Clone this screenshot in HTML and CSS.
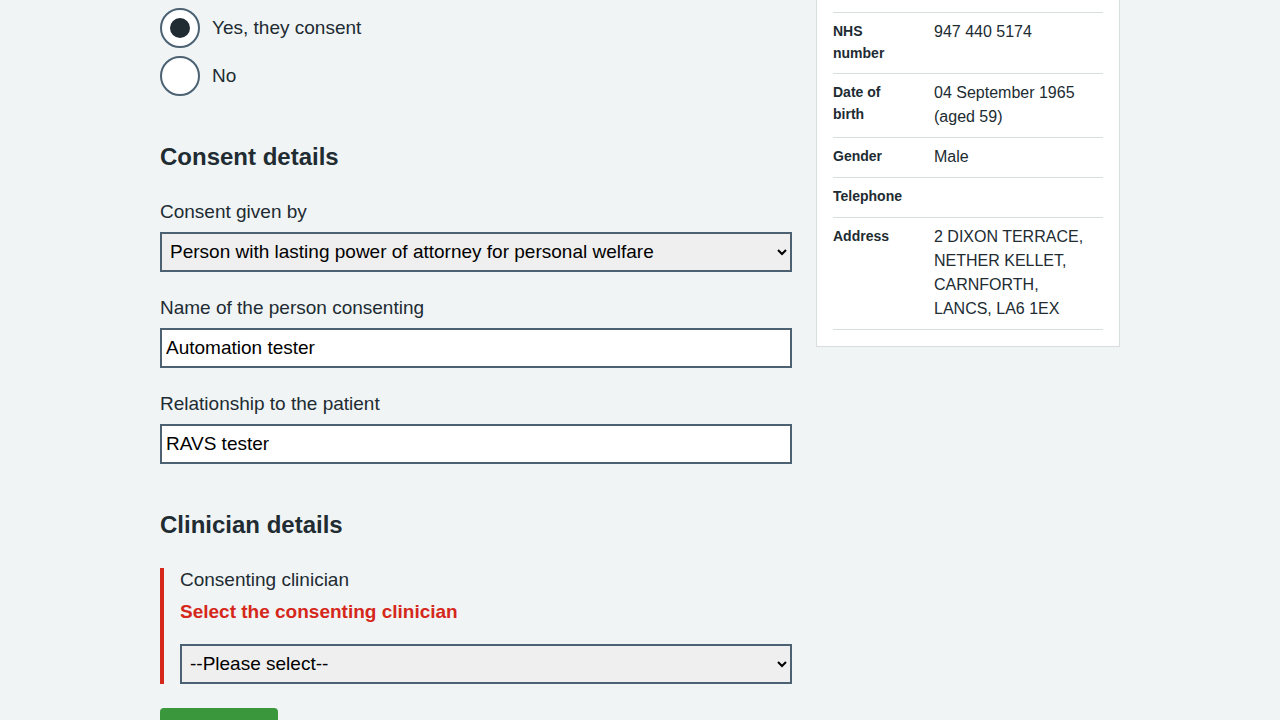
FILE: index.html
```html
<!DOCTYPE html>
<html lang="en">
<head>
<meta charset="utf-8">
<title>Consent</title>
<link rel="stylesheet" href="styles.css">
</head>
<body>
<div class="page">
  <main class="main">
    <div class="radios">
      <label class="radio"><input type="radio" name="consent" checked><span>Yes, they consent</span></label>
      <label class="radio"><input type="radio" name="consent"><span>No</span></label>
    </div>

    <h2 class="heading">Consent details</h2>
    <div class="group">
      <label class="label" for="given">Consent given by</label>
      <select id="given" class="select">
        <option>Person with lasting power of attorney for personal welfare</option>
      </select>
    </div>
    <div class="group">
      <label class="label" for="name">Name of the person consenting</label>
      <input id="name" class="input" type="text" value="Automation tester">
    </div>
    <div class="group">
      <label class="label" for="rel">Relationship to the patient</label>
      <input id="rel" class="input" type="text" value="RAVS tester">
    </div>

    <h2 class="heading">Clinician details</h2>
    <div class="group group-error">
      <label class="label" for="clin">Consenting clinician</label>
      <p class="error-msg">Select the consenting clinician</p>
      <select id="clin" class="select">
        <option>--Please select--</option>
      </select>
    </div>
    <button class="button" type="button">Continue</button>
  </main>

  <aside class="side">
    <div class="card">
      <dl class="summary">
        <div class="row"><dt>NHS number</dt><dd>947 440 5174</dd></div>
        <div class="row"><dt>Date of birth</dt><dd>04 September 1965 (aged 59)</dd></div>
        <div class="row"><dt>Gender</dt><dd>Male</dd></div>
        <div class="row"><dt>Telephone</dt><dd></dd></div>
        <div class="row"><dt>Address</dt><dd>2 DIXON TERRACE,<br>NETHER KELLET,<br>CARNFORTH,<br>LANCS, LA6 1EX</dd></div>
      </dl>
    </div>
  </aside>
</div>
</body>
</html>
```

FILE: styles.css
```css
* { box-sizing: border-box; }
html, body { margin: 0; padding: 0; }
body {
  background: #f0f4f5;
  color: #212b32;
  font-family: "Liberation Sans", Arial, sans-serif;
  overflow: hidden;
}
.page {
  width: 960px;
  margin: 0 auto;
  display: grid;
  grid-template-columns: 632px 304px;
  column-gap: 24px;
  align-items: start;
}
.main { padding-top: 8px; }

.radios { display: flex; flex-direction: column; gap: 8px; }
.radio {
  display: flex;
  align-items: center;
  gap: 12px;
  font-size: 19px;
  line-height: 24px;
  cursor: pointer;
}
.radio input {
  appearance: none;
  -webkit-appearance: none;
  margin: 0;
  width: 40px;
  height: 40px;
  border: 2px solid #4c6272;
  border-radius: 50%;
  background: #fff;
  display: grid;
  place-items: center;
  flex: none;
}
.radio input:checked::before {
  content: "";
  width: 20px;
  height: 20px;
  border-radius: 50%;
  background: #212b32;
}

.heading {
  font-size: 24px;
  line-height: 32px;
  font-weight: 700;
  margin: 45px 0 27px;
}

.group { margin-bottom: 24px; }
.label {
  display: block;
  font-size: 19px;
  line-height: 24px;
  margin-bottom: 8px;
}
.input, .select {
  display: block;
  width: 100%;
  height: 40px;
  border: 2px solid #4c6272;
  border-radius: 0;
  font-family: "Liberation Sans", Arial, sans-serif;
  font-size: 19px;
  color: #000;
  margin: 0;
}
.input { background: #fff; padding: 0 4px; }
.select { background-color: #efefef; padding: 0 4px 2px; }

.group-error {
  border-left: 4px solid #d5281b;
  padding-left: 16px;
}
.error-msg {
  margin: 0 0 20px;
  color: #d5281b;
  font-weight: 700;
  font-size: 19px;
  line-height: 24px;
}

.button {
  background: #3b973b;
  color: #fff;
  border: 0;
  border-radius: 4px;
  font-family: inherit;
  font-size: 19px;
  font-weight: 700;
  line-height: 24px;
  padding: 16px 18px 12px;
}

.card {
  background: #fff;
  border: 1px solid #d8dde0;
  border-top: 0;
  padding: 12px 16px 16px;
}
.summary { margin: 0; }
.row {
  display: grid;
  grid-template-columns: 101px 1fr;
  border-top: 1px solid #d8dde0;
  padding: 7px 0 8px;
}
.row:first-child { padding-bottom: 9px; }
.row:last-child { border-bottom: 1px solid #d8dde0; }
.row dt {
  font-weight: 700;
  font-size: 14px;
  line-height: 22px;
  margin: 0;
  padding-right: 24px;
}
.row dd {
  margin: 0;
  font-size: 16px;
  line-height: 24px;
  min-height: 24px;
}
```
